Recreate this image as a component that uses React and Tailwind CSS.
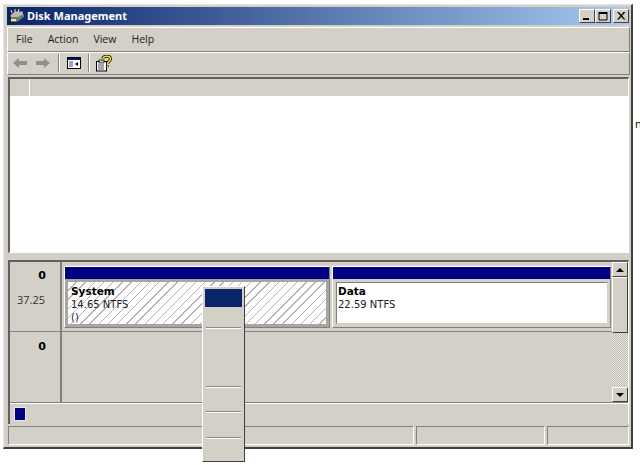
const font = { fontFamily: '"Open Sans","DejaVu Sans",sans-serif' };

function DiskIcon() {
  return (
    <svg width="18" height="16" viewBox="0 0 18 16" className="shrink-0">
      <path d="M2 7 L7 3 H15 L16 8 L9 14 H3 Z" fill="#b8b8b8" stroke="#202020" />
      <path d="M3 9 H10 L16 6 V9 L9 14 H3 Z" fill="#6b7c70" />
      <path d="M3 2 L4 5 M7 1 L7 4 M11 1 L10 4" stroke="#e8e8e8" />
      <rect x="3" y="11" width="5" height="2" fill="#e8e8a0" />
    </svg>
  );
}

function CaptionButton({ children }) {
  return (
    <div className="w-4 h-[14px] bg-[#d4d0c8] border border-t-white border-l-white border-r-[#404040] border-b-[#404040] flex items-center justify-center">
      <svg width="12" height="10" viewBox="0 0 12 10">{children}</svg>
    </div>
  );
}

function TitleBar() {
  return (
    <div className="h-[18px] flex items-center pl-[1px] pr-[1px] bg-[linear-gradient(90deg,#0a246a,#a6caf0)]">
      <DiskIcon />
      <span className="ml-[1px] text-white text-[11px] font-bold leading-none" style={{ fontFamily: '"Noto Sans",sans-serif' }}>Disk Management</span>
      <div className="ml-auto flex">
        <CaptionButton><rect x="2" y="7" width="6" height="2" fill="#000" /></CaptionButton>
        <CaptionButton><path d="M2 2.5 H10 M2 1.5 H10 M2 1 V9 H10 V1" fill="none" stroke="#000" /></CaptionButton>
        <div className="ml-[2px]"><CaptionButton><path d="M2.5 1 L9 8.5 M3.5 1 L10 8.5 M9 1 L2.5 8.5 M10 1 L3.5 8.5" stroke="#000" /></CaptionButton></div>
      </div>
    </div>
  );
}

function MenuBar() {
  return (
    <div className="h-[25px] mt-[2px] flex items-center pl-[8px] gap-[15px] text-[10.5px] text-[#202020] border border-t-white border-l-white border-r-[#808080] border-b-[#808080]">
      <span>File</span><span>Action</span><span>View</span><span>Help</span>
    </div>
  );
}

function ToolBar() {
  return (
    <div className="h-[23px] flex items-center pl-[5px] border border-t-white border-l-white border-r-[#808080] border-b-[#808080]">
      <svg width="14" height="10" viewBox="0 0 14 10"><path d="M0 5 L6 0 V3 H14 V7 H6 V10 Z" fill="#8f8f8f" /></svg>
      <svg width="14" height="10" viewBox="0 0 14 10" className="ml-[9px]"><path d="M14 5 L8 0 V3 H0 V7 H8 V10 Z" fill="#8f8f8f" /></svg>
      <div className="w-[2px] h-[18px] ml-[8px] border-l border-l-[#808080] border-r border-r-white" />
      <svg width="14" height="12" viewBox="0 0 14 12" className="ml-[7px]">
        <rect x="0.5" y="0.5" width="13" height="11" fill="#fff" stroke="#000" />
        <rect x="1" y="1" width="12" height="2" fill="#101060" />
        <rect x="2" y="4" width="4" height="6" fill="#a0a0c8" />
        <path d="M11 5 L8 7 L11 9 Z" fill="#000" />
      </svg>
      <div className="w-[2px] h-[18px] ml-[7px] border-l border-l-[#808080] border-r border-r-white" />
      <svg width="16" height="17" viewBox="0 0 16 17" className="ml-[6px]">
        <rect x="0.5" y="6.5" width="10" height="9.5" fill="#fff" stroke="#000" />
        <rect x="3" y="5" width="5" height="3" fill="#c0c0c0" stroke="#000" strokeWidth="0.7" />
        <path d="M2 10 H8 M2 12 H8 M2 14 H8" stroke="#000" strokeWidth="0.7" />
        <path d="M7 3.5 C7 1 14 0 14.5 3.5 C15 6 11.5 6 11.5 9 M11.5 10.5 V12" fill="none" stroke="#000" strokeWidth="3" />
        <path d="M7 3.5 C7 1 14 0 14.5 3.5 C15 6 11.5 6 11.5 9 M11.5 10.5 V12" fill="none" stroke="#f0e020" strokeWidth="1.6" />
      </svg>
    </div>
  );
}

function TopPane() {
  return (
    <div className="h-[177px] mt-[2px] mx-[1px] border-t-2 border-l-2 border-t-[#606060] border-l-[#606060] border-r border-b border-r-white border-b-white flex flex-col">
      <div className="h-[17px] flex">
        <div className="w-[20px] border-r border-r-white" />
      </div>
      <div className="flex-1 bg-white" />
    </div>
  );
}

function Partition({ w, children }) {
  return (
    <div className={`${w} h-full flex flex-col border border-t-white border-l-white border-r-[#808080] border-b-[#808080]`}>
      <div className="h-[12px] bg-[#000080] shrink-0" />
      {children}
    </div>
  );
}

function DiskRowHead({ children }) {
  return (
    <div className="w-[52px] h-full shrink-0 border-r-2 border-r-[#808080] flex flex-col items-center text-[11px] text-[#303030]">
      {children}
    </div>
  );
}

function Scrollbar() {
  const btn = "bg-[#d4d0c8] border border-t-white border-l-white border-r-[#404040] border-b-[#404040]";
  return (
    <div className="w-[16px] shrink-0 flex flex-col bg-[repeating-conic-gradient(#e8e6e0_0%_25%,#bdbab2_0%_50%)] bg-[length:2px_2px]">
      <div className={`h-[15px] ${btn} flex items-center justify-center`}>
        <svg width="8" height="4" viewBox="0 0 8 4"><path d="M4 0 L8 4 H0 Z" fill="#000" /></svg>
      </div>
      <div className={`h-[56px] ${btn}`} />
      <div className="flex-1" />
      <div className={`h-[15px] ${btn} flex items-center justify-center`}>
        <svg width="8" height="4" viewBox="0 0 8 4"><path d="M0 0 H8 L4 4 Z" fill="#000" /></svg>
      </div>
    </div>
  );
}

function BottomPane() {
  const dv = { fontFamily: '"DejaVu Sans",sans-serif' };
  return (
    <div className="h-[164px] mt-[7px] mx-[1px] border-t-2 border-l-2 border-t-[#606060] border-l-[#606060] border-r border-r-white flex flex-col">
      <div className="h-[141px] flex border-b border-b-[#808080]">
        <div className="flex-1 flex flex-col">
          <div className="h-[70px] flex border-b border-b-[#808080]">
            <DiskRowHead>
              <span className="mt-[7px] ml-[14px] text-[11px] font-bold leading-[14px] text-black" style={dv}>0</span>
              <span className="mt-[10px] ml-[-8px] text-[11px] leading-[14px]">37.25</span>
            </DiskRowHead>
            <div className="flex-1 flex gap-[2px] pl-[2px] pr-[1px] pt-[4px] pb-[3px]">
              <Partition w="w-[266px]">
                <div className="flex-1 p-[3px] bg-[#a8a6a0]">
                  <div className="h-full bg-white bg-[repeating-linear-gradient(135deg,#ffffff_0px,#ffffff_5.5px,#b4b4b4_5.5px,#b4b4b4_6.5px)] pl-[3px] pt-[3px] text-[11px] leading-[13px] text-[#202020]" style={dv}>
                    <div className="font-bold text-black text-[10.5px]">System</div>
                    <div className="text-[10px]">14.65 NTFS</div>
                    <div className="text-[10px]">()</div>
                  </div>
                </div>
              </Partition>
              <Partition w="flex-1">
                <div className="flex-1 bg-[#d4d0c8] pt-[3px] pl-[3px] pr-[2px] pb-[3px]">
                  <div className="h-full bg-white border border-t-[#808080] border-l-[#808080] border-r-[#d4d0c8] border-b-[#d4d0c8] pl-[1px] pt-[2px] text-[11px] leading-[13px] text-[#202020]" style={dv}>
                    <div className="font-bold text-black text-[10.5px]">Data</div>
                    <div className="text-[10px]">22.59 NTFS</div>
                  </div>
                </div>
              </Partition>
            </div>
          </div>
          <div className="flex-1 flex">
            <DiskRowHead>
              <span className="mt-[8px] ml-[14px] text-[11px] font-bold leading-[14px] text-black" style={dv}>0</span>
            </DiskRowHead>
          </div>
        </div>
        <Scrollbar />
      </div>
      <div className="flex-1 flex items-center pl-[4px] border-t border-t-white">
        <div className="w-[12px] h-[14px] bg-[#000080] border border-[#e8e8f0]" />
      </div>
    </div>
  );
}

function StatusBar() {
  const cell = "border border-t-[#808080] border-l-[#808080] border-r-white border-b-white";
  return (
    <div className="h-[20px] mt-[2px] flex gap-[2px] px-[1px] pb-[1px]">
      <div className={`flex-1 ${cell}`} />
      <div className={`w-[129px] ${cell}`} />
      <div className={`w-[82px] ${cell}`} />
    </div>
  );
}

function ContextMenu() {
  const line = <div className="h-[2px] mx-[1px] border-t border-t-[#8c8a84] border-b border-b-white shrink-0" />;
  return (
    <div className="absolute left-[202px] top-[286px] w-[43px] h-[176px] bg-[#d4d0c8] border border-t-white border-l-white border-r-[#404040] border-b-[#404040] p-[2px] flex flex-col">
      <div className="h-[18px] bg-[#0a246a] shrink-0" />
      <div className="h-[20px] shrink-0" />
      {line}
      <div className="h-[57px] shrink-0" />
      {line}
      <div className="h-[23px] shrink-0" />
      {line}
      <div className="h-[24px] shrink-0" />
      {line}
    </div>
  );
}

export default function App() {
  return (
    <div className="relative w-[640px] h-[465px] bg-white overflow-hidden pl-[3px] pt-[4px]" style={font}>
      <div className="w-[630px] h-[445px] bg-[#d4d0c8] border-t border-l border-t-[#e8e6e0] border-l-[#e8e6e0] border-r-2 border-b-2 border-r-[#404040] border-b-[#404040] pt-[2px] pl-[3px] pr-[1px] pb-[1px] flex flex-col">
        <TitleBar />
        <MenuBar />
        <ToolBar />
        <TopPane />
        <BottomPane />
        <StatusBar />
      </div>
      <ContextMenu />
      <span className="absolute left-[635px] top-[117px] text-[11px] leading-[14px] text-black">n</span>
    </div>
  );
}
